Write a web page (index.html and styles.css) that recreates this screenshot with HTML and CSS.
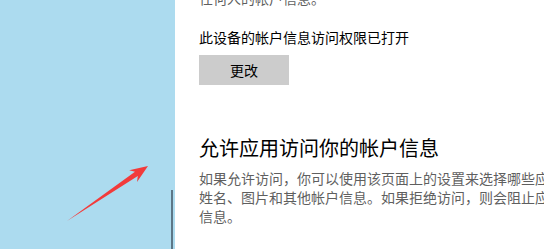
FILE: index.html
```html
<!DOCTYPE html>
<html lang="zh-CN">
<head>
    <meta charset="UTF-8">
    <meta name="viewport" content="width=device-width, initial-scale=1.0">
    <title>帐户信息</title>
    <link rel="stylesheet" href="styles.css">
</head>
<body>
    <aside class="lado">
        <div class="barra"></div>
        <svg class="flecha" width="175" height="249" viewBox="0 0 175 249">
            <polygon points="67,221 135,171.8 129.2,170.3 148,166 137,181.9 137.8,176" fill="#f23b3b"/>
        </svg>
    </aside>
    <main class="contenido">
        <p class="texto gris previo">任何人的帐户信息。</p>
        <p class="texto estado">此设备的帐户信息访问权限已打开</p>
        <button class="boton">更改</button>
        <h2 class="titulo">允许应用访问你的帐户信息</h2>
        <p class="texto gris parrafo">如果允许访问，你可以使用该页面上的设置来选择哪些应用可以访问你的<br>姓名、图片和其他帐户信息。如果拒绝访问，则会阻止应用访问你的帐户<br>信息。</p>
    </main>
</body>
</html>
```

FILE: styles.css
```css
body {
    font-family: "Noto Sans CJK SC", "Noto Sans", sans-serif;
    margin: 0;
    padding: 0;
    display: flex;
    height: 249px;
    overflow: hidden;
    background-color: #fff;
}

.lado {
    width: 175px;
    flex-shrink: 0;
    background-color: #acdbef;
    position: relative;
}

.barra {
    position: absolute;
    left: 171px;
    top: 190px;
    bottom: 0;
    width: 2px;
    background-color: #5d7787;
}

.flecha {
    position: absolute;
    left: 0;
    top: 0;
}

.contenido {
    padding-left: 24px;
    display: flex;
    flex-direction: column;
    align-items: flex-start;
    white-space: nowrap;
}

.texto {
    margin: 0;
    font-size: 14px;
    line-height: 20px;
    color: #000;
}

.gris {
    color: #5f5f5f;
}

.previo {
    margin-top: -12px;
}

.estado {
    margin-top: 19px;
}

.boton {
    margin-top: 8px;
    width: 90px;
    height: 30px;
    border: none;
    background-color: #cccccc;
    font-family: inherit;
    font-size: 14px;
    color: #000;
    padding: 0;
}

.titulo {
    margin: 49px 0 0 0;
    font-size: 20px;
    line-height: 28px;
    font-weight: normal;
    color: #000;
}

.parrafo {
    margin-top: 7px;
    line-height: 19px;
}
```
